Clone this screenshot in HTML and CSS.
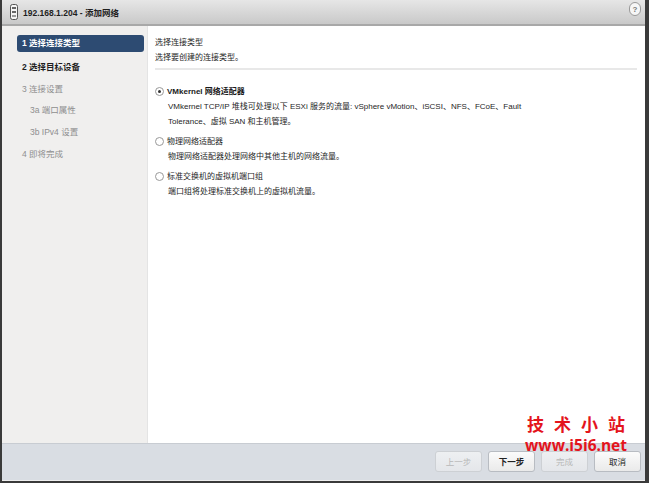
FILE: index.html
```html
<!DOCTYPE html>
<html>
<head>
<meta charset="utf-8">
<link rel="stylesheet" href="styles.css">
</head>
<body>
<div class="window">
  <div class="titlebar">
    <div class="title">
      <svg class="tab-icon" width="8" height="16" viewBox="0 0 8 16"><rect x="0.5" y="0.5" width="7" height="15" rx="2" fill="#f4f4f4" stroke="#555"/><rect x="2" y="3" width="4" height="2" fill="#666"/><rect x="2" y="7" width="4" height="2" fill="#666"/><rect x="2" y="11" width="4" height="2" fill="#999"/></svg>
      <span>192.168.1.204 - 添加网络</span>
    </div>
    <div class="help">?</div>
  </div>
  <div class="body">
    <div class="nav">
      <div class="step active">1 选择连接类型</div>
      <div class="step current">2 选择目标设备</div>
      <div class="step">3 连接设置</div>
      <div class="step sub">3a 端口属性</div>
      <div class="step sub">3b IPv4 设置</div>
      <div class="step">4 即将完成</div>
    </div>
    <div class="content">
      <div class="head">
        <div>选择连接类型</div>
        <div>选择要创建的连接类型。</div>
      </div>
      <div class="options">
        <div class="option">
          <span class="radio checked"></span>
          <div class="opt-text">
            <div class="opt-title bold">VMkernel 网络适配器</div>
            <div class="opt-desc">VMkernel TCP/IP 堆栈可处理以下 ESXi 服务的流量: vSphere vMotion、iSCSI、NFS、FCoE、Fault Tolerance、虚拟 SAN 和主机管理。</div>
          </div>
        </div>
        <div class="option">
          <span class="radio"></span>
          <div class="opt-text">
            <div class="opt-title">物理网络适配器</div>
            <div class="opt-desc">物理网络适配器处理网络中其他主机的网络流量。</div>
          </div>
        </div>
        <div class="option">
          <span class="radio"></span>
          <div class="opt-text">
            <div class="opt-title">标准交换机的虚拟机端口组</div>
            <div class="opt-desc">端口组将处理标准交换机上的虚拟机流量。</div>
          </div>
        </div>
      </div>
      <div class="watermark">
        <div class="wm-cn">技术小站</div>
        <div class="wm-url">www.i5i6.net</div>
      </div>
    </div>
  </div>
  <div class="footer">
    <button class="btn disabled">上一步</button>
    <button class="btn strong">下一步</button>
    <button class="btn disabled">完成</button>
    <button class="btn">取消</button>
  </div>
</div>
</body>
</html>
```
FILE: styles.css
```css
html, body { margin: 0; padding: 0; }
body {
  width: 649px; height: 483px; overflow: hidden;
  font-family: "Liberation Sans", Arial, "Noto Sans CJK SC", sans-serif;
  font-size: 8px; color: #262626;
  background: #fff;
}
.window {
  width: 649px; height: 483px; box-sizing: border-box;
  border: 2px solid #3a3a3a; border-top: 0; border-right-width: 4px;
  display: flex; flex-direction: column;
  background: #fff;
}
.titlebar {
  height: 26px; flex: none; box-sizing: border-box;
  background: linear-gradient(#e6e6e6, #c9c9c9);
  border-bottom: 2px solid #a8a8a8;
  display: flex; align-items: center; justify-content: space-between;
  padding: 0 4px 0 8px;
}
.title { display: flex; align-items: center; gap: 5px; font-weight: bold; font-size: 8.5px; color: #1e1e1e; }
.help {
  width: 10px; height: 12px; border: 1px solid #999; border-radius: 6px;
  background: #f6f6f6; font-size: 8px; font-weight: bold; color: #777;
  display: flex; align-items: center; justify-content: center; margin-top: -6px;
}
.body { flex: 1; display: flex; min-height: 0; }
.nav {
  width: 146px; flex: none; background: #f0efee; border-right: 1px solid #e4e4e4;
  padding: 9px 3px 0 15px; box-sizing: border-box;
  display: flex; flex-direction: column;
}
.step { height: 21.7px; line-height: 21.7px; color: #8e8e8e; padding-left: 5px; font-size: 8.5px; }
.step.active { background: #2d4b72; color: #fff; font-weight: bold; border-radius: 3px; height: 17px; line-height: 17px; margin-bottom: 5px; }
.step.current { color: #1e1e1e; font-weight: bold; }
.step.sub { padding-left: 13px; }
.content { flex: 1; position: relative; padding: 0 8px 0 7px; }
.head {
  padding-top: 9px; padding-bottom: 3px; line-height: 15px;
  border-bottom: 2px solid #e8e8e8;
}
.options { padding-top: 14px; display: flex; flex-direction: column; gap: 5px; }
.option { display: flex; gap: 3px; }
.radio {
  width: 9px; height: 9px; border: 1px solid #999; border-radius: 50%;
  flex: none; margin-top: 3px; box-sizing: border-box; background: #fff;
  display: flex; align-items: center; justify-content: center;
}
.radio.checked::after { content: ""; width: 3px; height: 3px; border-radius: 50%; background: #333; }
.opt-text { line-height: 15px; padding-left: 0; }
.opt-title.bold { font-weight: bold; color: #1a1a1a; }
.opt-desc { padding-left: 1px; max-width: 365px; }
.watermark {
  position: absolute; right: 18px; bottom: -11px; text-align: center; color: #e4141c;
  font-weight: bold;
}
.wm-cn { font-family: "Noto Sans CJK SC", sans-serif; font-size: 17px; letter-spacing: 10px; margin-right: -10px; line-height: 24px; }
.wm-url { font-family: "Open Sans", sans-serif; font-size: 15.5px; line-height: 18px; }
.footer {
  height: 38px; flex: none; box-sizing: border-box;
  background: #d9dde3; border-top: 1px solid #c8ccd2; border-bottom: 1px solid #eee;
  display: flex; justify-content: flex-end; align-items: center; gap: 6px;
  padding: 0 4px 2px 0;
}
.btn {
  width: 47px; height: 21px; font-family: inherit; font-size: 8.5px;
  border: 1px solid #b8bcc2; border-radius: 3px; background: linear-gradient(#fbfbfb, #eaeaea);
  color: #222; padding: 0;
}
.btn.strong { font-weight: bold; }
.btn.disabled { color: #b8b8b8; border-color: #cdd0d4; background: linear-gradient(#eef0f2, #e4e6ea); }
```
